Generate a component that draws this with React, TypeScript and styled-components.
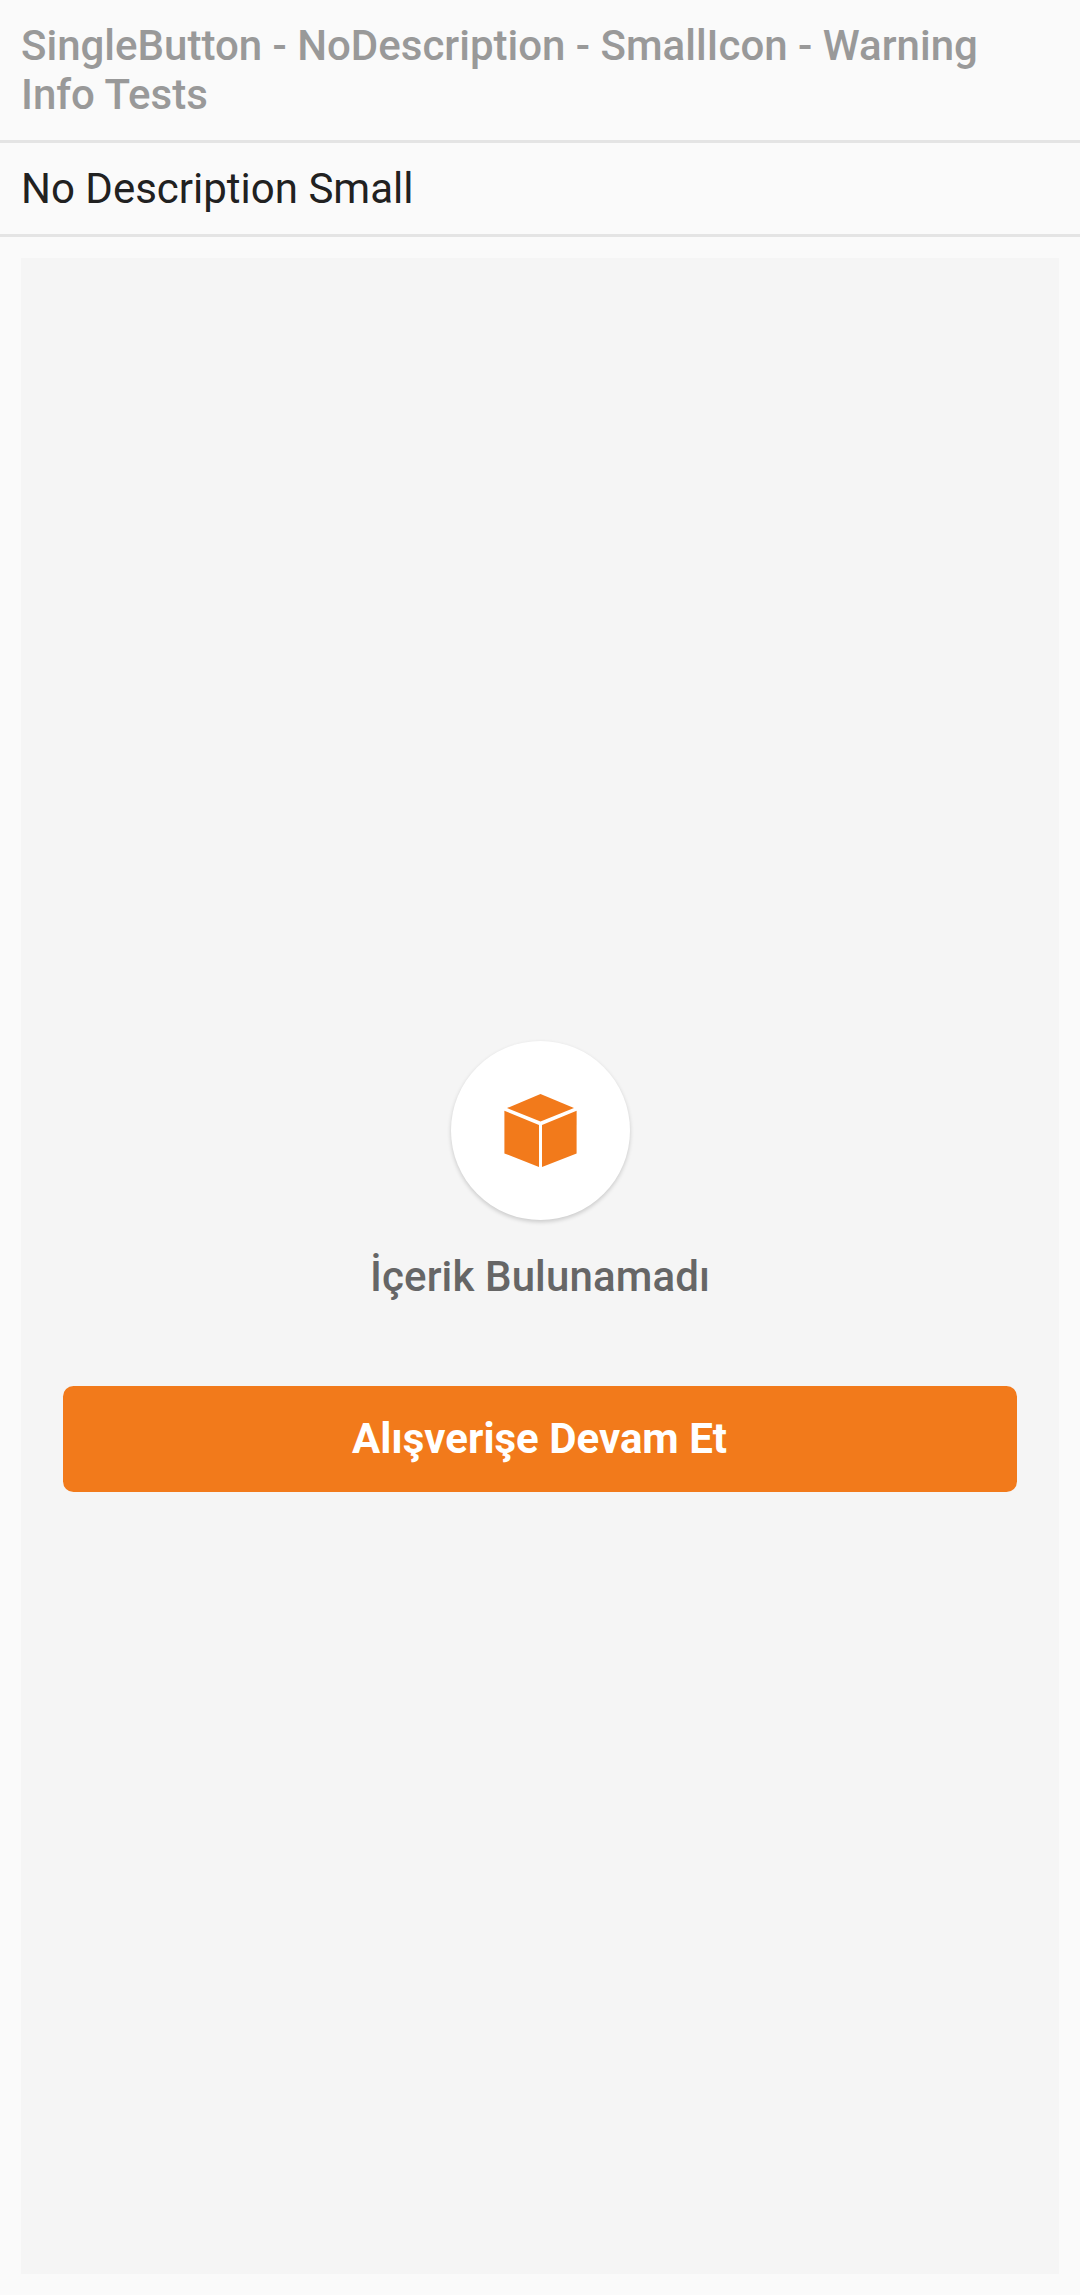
import React from "react";
import styled, { createGlobalStyle } from "styled-components";

const Global = createGlobalStyle`
  * { box-sizing: border-box; }
  body { margin: 0; background: #fafafa; font-family: Roboto, sans-serif; }
`;
const Page = styled.main`
  height: 2295px;
  display: flex;
  flex-direction: column;
`;
const Title = styled.h1`
  margin: 0;
  height: 143px;
  padding: 21px;
  border-bottom: 3px solid #e4e4e4;
  font-size: 42px;
  line-height: 49px;
  font-weight: 500;
  color: #999;
`;
const Subtitle = styled.h2`
  margin: 0;
  height: 94px;
  padding: 21px;
  border-bottom: 3px solid #e4e4e4;
  font-size: 42px;
  line-height: 49px;
  font-weight: 400;
  color: #212121;
`;
const Panel = styled.section`
  flex: 1;
  margin: 21px;
  padding: 1px 42px 0;
  background: #f5f5f5;
  display: flex;
  flex-direction: column;
  align-items: center;
  justify-content: center;
`;
const IconCircle = styled.div`
  width: 179px;
  height: 179px;
  margin-left: 1px;
  border-radius: 50%;
  background: #fff;
  box-shadow: 0 2px 4px rgba(0, 0, 0, 0.18);
  display: flex;
  align-items: center;
  justify-content: center;
`;
const BoxIcon = styled.svg`
  display: block;
  width: 73px;
  height: 73px;
  fill: #f27a1b;
`;
const Message = styled.p`
  margin: 32px 0 0;
  font-size: 42px;
  line-height: 49px;
  font-weight: 500;
  letter-spacing: 0.12px;
  color: #666;
`;
const Button = styled.button`
  width: 100%;
  height: 106px;
  margin-top: 85px;
  padding: 28px 1px 29px 0;
  border: 0;
  border-radius: 10.5px;
  background: #f27a1b;
  color: #fff;
  font: 700 42px/49px Roboto, sans-serif;
`;

export default function App() {
  return (
    <Page>
      <Global />
      <Title>SingleButton - NoDescription - SmallIcon - Warning Info Tests</Title>
      <Subtitle>No Description Small</Subtitle>
      <Panel>
        <IconCircle>
          <BoxIcon viewBox="0 0 73 73">
            <path d="M36.5 0 70 14.1 36.5 27.6 3 14.1Z" />
            <path d="M.4 16.8 35 31V73L.4 59.4Z" />
            <path d="M72.6 16.8 38 31V73L72.6 59.4Z" />
          </BoxIcon>
        </IconCircle>
        <Message>İçerik Bulunamadı</Message>
        <Button>Alışverişe Devam Et</Button>
      </Panel>
    </Page>
  );
}
